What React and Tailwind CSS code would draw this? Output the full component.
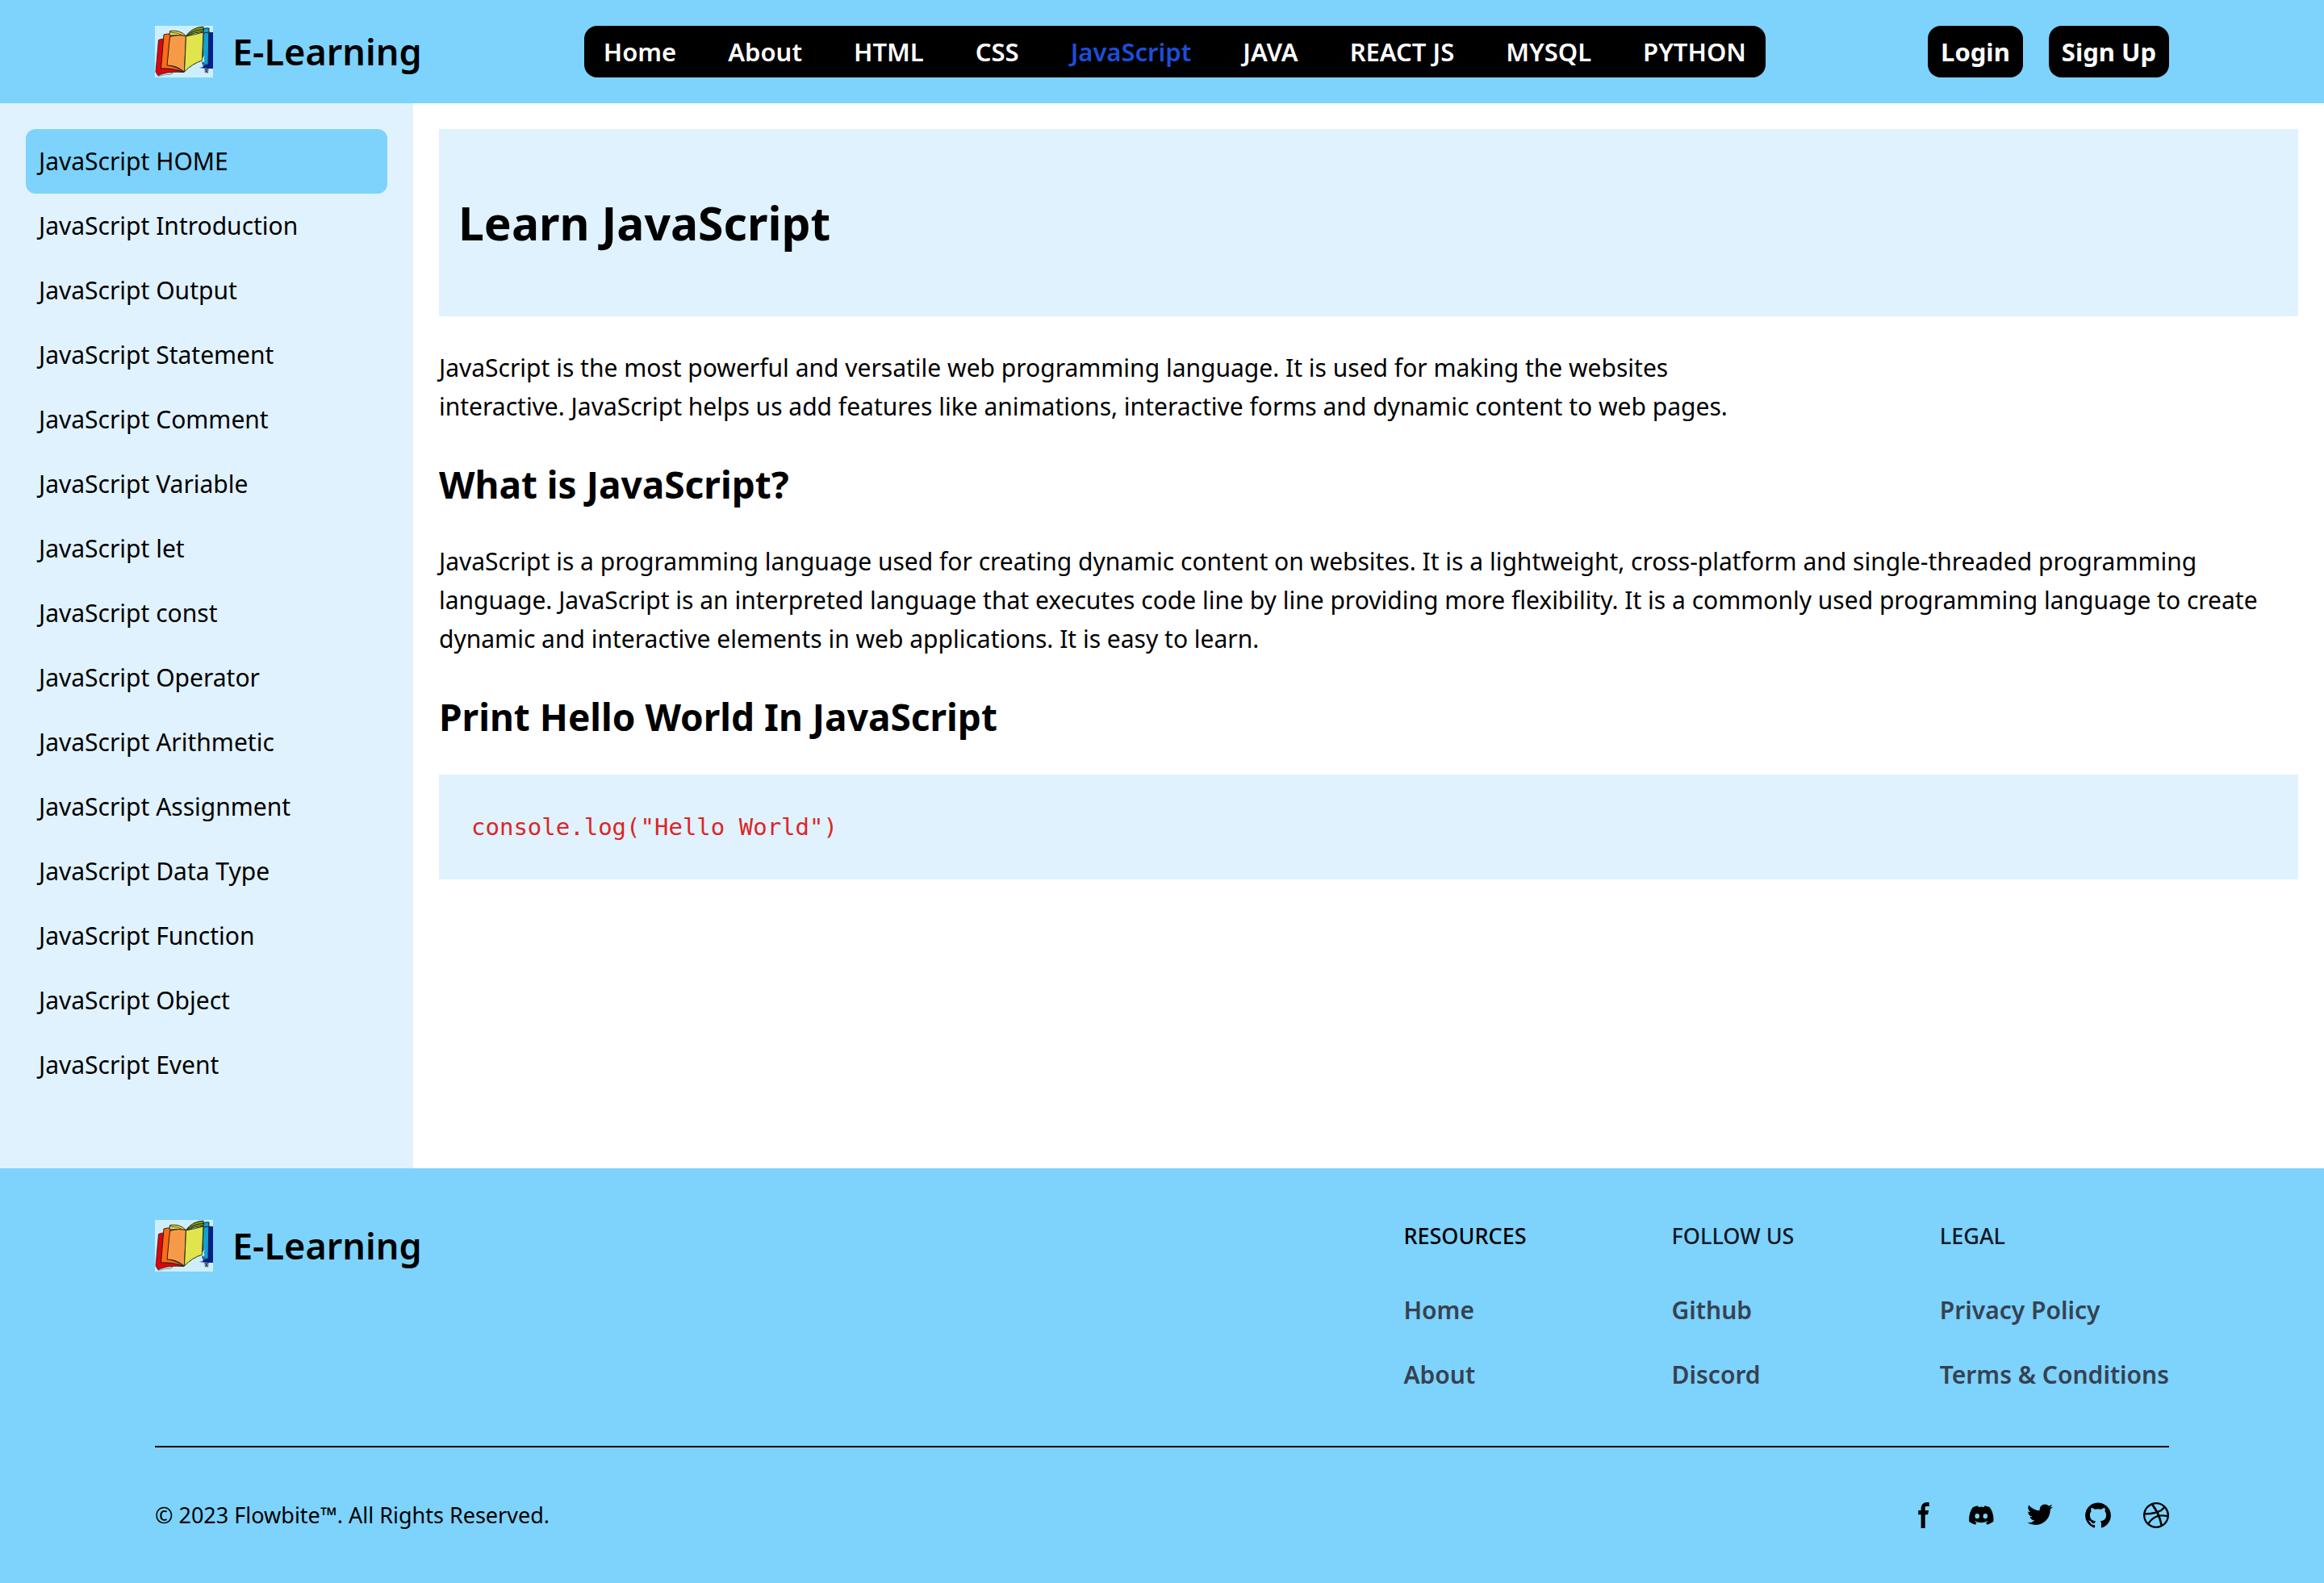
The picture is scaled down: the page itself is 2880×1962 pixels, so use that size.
import React from "react";

const navItems = ["Home", "About", "HTML", "CSS", "JavaScript", "JAVA", "REACT JS", "MYSQL", "PYTHON"];

const topics = [
  "HOME",
  "Introduction",
  "Output",
  "Statement",
  "Comment",
  "Variable",
  "let",
  "const",
  "Operator",
  "Arithmetic",
  "Assignment",
  "Data Type",
  "Function",
  "Object",
  "Event",
];

const footerColumns = [
  { title: "RESOURCES", color: "text-black", links: ["Home", "About"] },
  { title: "FOLLOW US", color: "text-[#111827]", links: ["Github", "Discord"] },
  { title: "LEGAL", color: "text-[#111827]", links: ["Privacy Policy", "Terms & Conditions"] },
];

const socials = [
  {
    name: "Facebook page",
    viewBox: "0 0 8 19",
    d: "M6.135 3H8V0H6.135a4.147 4.147 0 0 0-4.142 4.142V6H0v3h2v9.938h3V9h2.021l.592-3H5V3.591A.6.6 0 0 1 5.592 3h.543Z",
  },
  {
    name: "Discord community",
    viewBox: "0 0 21 16",
    d: "M16.942 1.556a16.3 16.3 0 0 0-4.126-1.3 12.04 12.04 0 0 0-.529 1.1 15.175 15.175 0 0 0-4.573 0 11.585 11.585 0 0 0-.535-1.1 16.274 16.274 0 0 0-4.129 1.3A17.392 17.392 0 0 0 .182 13.218a15.785 15.785 0 0 0 4.963 2.521c.41-.564.773-1.16 1.084-1.785a10.63 10.63 0 0 1-1.706-.83c.143-.106.283-.217.418-.33a11.664 11.664 0 0 0 10.118 0c.137.113.277.224.418.33-.544.328-1.116.606-1.71.832a12.52 12.52 0 0 0 1.084 1.785 16.46 16.46 0 0 0 5.064-2.595 17.286 17.286 0 0 0-2.973-11.59ZM6.678 10.813a1.941 1.941 0 0 1-1.8-2.045 1.93 1.93 0 0 1 1.8-2.047 1.919 1.919 0 0 1 1.8 2.047 1.93 1.93 0 0 1-1.8 2.045Zm6.644 0a1.94 1.94 0 0 1-1.8-2.045 1.93 1.93 0 0 1 1.8-2.047 1.918 1.918 0 0 1 1.8 2.047 1.93 1.93 0 0 1-1.8 2.045Z",
  },
  {
    name: "Twitter page",
    viewBox: "0 0 20 17",
    d: "M20 1.892a8.178 8.178 0 0 1-2.355.635 4.074 4.074 0 0 0 1.8-2.235 8.344 8.344 0 0 1-2.605.98A4.13 4.13 0 0 0 13.85 0a4.068 4.068 0 0 0-4.1 4.038 4 4 0 0 0 .105.919A11.705 11.705 0 0 1 1.4.734a4.006 4.006 0 0 0 1.268 5.392 4.165 4.165 0 0 1-1.859-.5v.05A4.057 4.057 0 0 0 4.1 9.635a4.19 4.19 0 0 1-1.856.07 4.108 4.108 0 0 0 3.831 2.807A8.36 8.36 0 0 1 0 14.184 11.732 11.732 0 0 0 6.291 16 11.502 11.502 0 0 0 17.964 4.5c0-.177 0-.35-.012-.523A8.143 8.143 0 0 0 20 1.892Z",
  },
  {
    name: "GitHub account",
    viewBox: "0 0 20 20",
    d: "M10 .333A9.911 9.911 0 0 0 6.866 19.65c.5.092.678-.215.678-.477 0-.237-.01-1.017-.014-1.845-2.757.6-3.338-1.169-3.338-1.169a2.627 2.627 0 0 0-1.1-1.451c-.9-.615.07-.6.07-.6a2.084 2.084 0 0 1 1.518 1.021 2.11 2.11 0 0 0 2.884.823c.044-.503.268-.973.63-1.325-2.2-.25-4.516-1.1-4.516-4.9A3.832 3.832 0 0 1 4.7 7.068a3.56 3.56 0 0 1 .095-2.623s.832-.266 2.726 1.016a9.409 9.409 0 0 1 4.962 0c1.89-1.282 2.717-1.016 2.717-1.016.366.83.402 1.768.1 2.623a3.827 3.827 0 0 1 1.02 2.659c0 3.807-2.319 4.644-4.525 4.889a2.366 2.366 0 0 1 .673 1.834c0 1.326-.012 2.394-.012 2.72 0 .263.18.572.681.475A9.911 9.911 0 0 0 10 .333Z",
  },
  {
    name: "Dribbble account",
    viewBox: "0 0 20 20",
    d: "M10 0a10 10 0 1 0 10 10A10.009 10.009 0 0 0 10 0Zm6.613 4.614a8.523 8.523 0 0 1 1.93 5.32 20.094 20.094 0 0 0-5.949-.274c-.059-.149-.122-.292-.184-.441a23.879 23.879 0 0 0-.566-1.239 11.41 11.41 0 0 0 4.769-3.366ZM8 1.707a8.821 8.821 0 0 1 2-.238 8.5 8.5 0 0 1 5.664 2.152 9.608 9.608 0 0 1-4.476 3.087A45.758 45.758 0 0 0 8 1.707ZM1.642 8.262a8.57 8.57 0 0 1 4.73-5.981A53.998 53.998 0 0 1 9.54 7.222a32.078 32.078 0 0 1-7.9 1.04h.002Zm2.01 7.46a8.51 8.51 0 0 1-2.2-5.707v-.262a31.64 31.64 0 0 0 8.777-1.219c.243.477.477.964.692 1.449-.114.032-.227.067-.336.1a13.569 13.569 0 0 0-6.942 5.636l.009.003ZM10 18.556a8.508 8.508 0 0 1-5.243-1.8 11.717 11.717 0 0 1 6.7-5.332.509.509 0 0 1 .055-.02 35.65 35.65 0 0 1 1.819 6.476 8.476 8.476 0 0 1-3.331.676Zm4.772-1.462A37.232 37.232 0 0 0 13.113 11a12.513 12.513 0 0 1 5.321.364 8.56 8.56 0 0 1-3.66 5.73h-.002Z",
  },
];

function BookIcon() {
  return (
    <svg viewBox="0 0 72 64" className="h-16 w-[72px] shrink-0" aria-hidden="true">
      <rect width="72" height="64" fill="#cdeffd" />
      {/* covers on the right */}
      <path d="M66 8.500h6v44.500h-8l-9-1 5-1-1-2 7-1z" fill="#001f8a" />
      <path d="M60 3.500q4-1 7-.5l-1 45.500-7-1z" fill="#12a0d6" stroke="#10222c" />
      <path d="M60 9q6-1.500 12-.5" fill="none" stroke="#10222c" />
      <path d="M61 52.500l6 .5-1 6-4-1z" fill="#8a97a8" />
      <path d="M62 53l3.500 5M65.500 53l-3.500 5" stroke="#10222c" strokeWidth="0.900" />
      {/* covers on the left */}
      <path d="M4.500 17.500q3-1.500 8-1.500L8 52l14 1.500 14 4q-10-.5-17 0Q9 58.500 4 62L1 57z" fill="#d9060f" stroke="#331010" strokeWidth="0.800" />
      <path d="M4 62q8-4 18-3.500l-3 2q-8-.5-14 2z" fill="#f3f7fa" stroke="#444" strokeWidth="0.500" />
      <path d="M11 11q5-1.500 9-1L16 49q10 1 20 8.500Q22 52 7.500 53z" fill="#ff6a13" stroke="#2b1a10" />
      {/* open pages */}
      <path d="M18.500 6.500q12-2 20 6L37 14q-9-4-19-2z" fill="#ece24a" stroke="#2b2b10" />
      <path d="M19 8q10 0 18 5" fill="none" stroke="#2b2b10" strokeWidth="0.800" />
      <path d="M18.500 13.500Q31 10 38.500 13L36.500 57Q27 49 15 49z" fill="#f79a48" stroke="#2b1a10" />
      <path d="M39 12Q46 2 60 1v6q-12 1-21 6z" fill="#7f9c1c" stroke="#1c2408" />
      <path d="M39.500 12Q48 5 60 4.500" fill="none" stroke="#1c2408" />
      <path d="M38.500 13Q50 10.500 60 8L58.500 43Q46 47 36.500 57z" fill="#e0e44d" stroke="#2b2b10" />
      <path d="M59 40l2.500-3.500-1 4.500 1 3-3 1z" fill="#d9f1fb" />
    </svg>
  );
}

function Brand() {
  return (
    <a href="#home" className="flex items-center gap-6">
      <BookIcon />
      <span className="whitespace-nowrap text-[45px] leading-[64px] font-semibold">E-Learning</span>
    </a>
  );
}

function Header() {
  return (
    <header className="bg-[#7dd3fc]">
      <div className="mx-auto flex max-w-[2560px] items-center justify-between p-8">
        <Brand />
        <nav className="rounded-2xl bg-black px-6 py-2">
          <ul className="flex gap-16">
            {navItems.map((item) => (
              <li key={item}>
                <a
                  href={"#" + item}
                  className={
                    item === "JavaScript"
                      ? "whitespace-nowrap text-[31px] leading-[48px] font-semibold text-[#1d4ed8]"
                      : "whitespace-nowrap text-[31px] leading-[48px] font-semibold text-white"
                  }
                >
                  {item}
                </a>
              </li>
            ))}
          </ul>
        </nav>
        <div className="flex gap-8">
          {["Login", "Sign Up"].map((label) => (
            <button
              key={label}
              type="button"
              className="rounded-2xl bg-black px-4 py-2 text-[31px] leading-[48px] font-bold whitespace-nowrap text-white"
            >
              {label}
            </button>
          ))}
        </div>
      </div>
    </header>
  );
}

function Sidebar() {
  return (
    <aside className="w-[512px] shrink-0 bg-[#e0f2fe] px-8 pt-8 pb-[88px]">
      <ul>
        {topics.map((topic, i) => (
          <li key={topic}>
            <a
              href={"#topic-" + i}
              className={
                i === 0
                  ? "block rounded-xl bg-[#7dd3fc] p-4 text-[30px] leading-[48px]"
                  : "block rounded-xl p-4 text-[30px] leading-[48px]"
              }
            >
              JavaScript {topic}
            </a>
          </li>
        ))}
      </ul>
    </aside>
  );
}

function Article() {
  return (
    <main className="flex min-w-0 flex-1 flex-col gap-10 p-8">
      <div className="bg-[#e0f2fe] px-6 py-20">
        <h1 className="text-[57px] leading-[72px] font-bold">Learn JavaScript</h1>
      </div>
      <p className="max-w-[1632px] text-[30px] leading-[48px]">
        JavaScript is the most powerful and versatile web programming language. It is used for making the websites
        interactive. JavaScript helps us add features like animations, interactive forms and dynamic content to web
        pages.
      </p>
      <h2 className="text-[46px] leading-[64px] font-bold">What is JavaScript?</h2>
      <p className="text-[30px] leading-[48px]">
        JavaScript is a programming language used for creating dynamic content on websites. It is a lightweight,
        cross-platform and single-threaded programming language. JavaScript is an interpreted language that executes
        code line by line providing more flexibility. It is a commonly used programming language to create dynamic and
        interactive elements in web applications. It is easy to learn.
      </p>
      <h2 className="text-[46px] leading-[64px] font-bold">Print Hello World In JavaScript</h2>
      <pre className="bg-[#e0f2fe] p-10 font-['DejaVu_Sans_Mono',monospace] text-[29px] leading-[50px] text-[#dc2626]">
        <code className="font-['DejaVu_Sans_Mono',monospace]">console.log("Hello World")</code>
      </pre>
    </main>
  );
}

function Footer() {
  return (
    <footer className="bg-[#7dd3fc]">
      <div className="mx-auto max-w-[2560px] px-8 py-16">
        <div className="flex items-start justify-between">
          <Brand />
          <div className="grid grid-cols-3 gap-12">
            {footerColumns.map(({ title, color, links }) => (
              <section key={title}>
                <h2 className={color + " mb-12 text-[27px] leading-[40px] font-medium"}>{title}</h2>
                <ul className="flex flex-col gap-8">
                  {links.map((link) => (
                    <li key={link} className="text-[30px] leading-[48px] font-semibold text-[#374151]">
                      <a href={"#" + link} className="whitespace-nowrap">
                        {link}
                      </a>
                    </li>
                  ))}
                </ul>
              </section>
            ))}
          </div>
        </div>
        <hr className="my-16 border-t-2 border-black" />
        <div className="flex items-center justify-between">
          <span className="text-[27px] leading-[40px]">
            © 2023 <a href="#flowbite">Flowbite™</a>. All Rights Reserved.
          </span>
          <div className="flex gap-10">
            {socials.map(({ name, viewBox, d }) => (
              <a key={name} href={"#" + name} aria-label={name}>
                <svg viewBox={viewBox} className="size-8" fill="currentColor" aria-hidden="true">
                  <path fillRule="evenodd" clipRule="evenodd" d={d} />
                </svg>
              </a>
            ))}
          </div>
        </div>
      </div>
    </footer>
  );
}

export default function App() {
  return (
    <div className="flex min-h-screen flex-col bg-white font-['Noto_Sans','Open_Sans',sans-serif] text-black">
      <Header />
      <div className="flex flex-1">
        <Sidebar />
        <Article />
      </div>
      <Footer />
    </div>
  );
}
